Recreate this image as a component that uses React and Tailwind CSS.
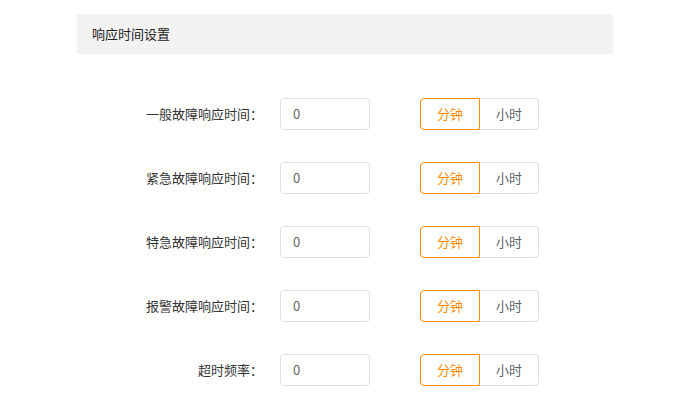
const rows = ['一般故障响应时间：', '紧急故障响应时间：', '特急故障响应时间：', '报警故障响应时间：', '超时频率：'];

export default function App() {
  return (
    <div className="min-h-screen bg-white pt-[14px] pl-[77px]" style={{ fontFamily: '"Noto Sans CJK SC", "Noto Sans", sans-serif' }}>
      <div className="w-[536px]">
        <div className="h-[40px] bg-[#f2f2f2] flex items-center pl-[15px] text-[13px] text-[#222]">响应时间设置</div>
        <div className="flex flex-col gap-[32px] pt-[44px]">
          {rows.map((label) => (
            <div key={label} className="flex items-center h-[32px]">
              <div className="w-[186px] text-right text-[13px] text-[#333]">{label}</div>
              <div className="ml-[17px] w-[90px] h-[32px] border border-[#dcdfe6] rounded-[4px] flex items-center pl-[12px] text-[13px] text-[#606266]">0</div>
              <div className="ml-[50px] flex h-[32px]">
                <button className="w-[60px] h-full border border-[#ff8c00] rounded-l-[4px] text-[13px] text-[#ff8c00]">分钟</button>
                <button className="w-[59px] h-full border border-l-0 border-[#dcdfe6] rounded-r-[4px] text-[13px] text-[#606266]">小时</button>
              </div>
            </div>
          ))}
        </div>
      </div>
    </div>
  );
}
